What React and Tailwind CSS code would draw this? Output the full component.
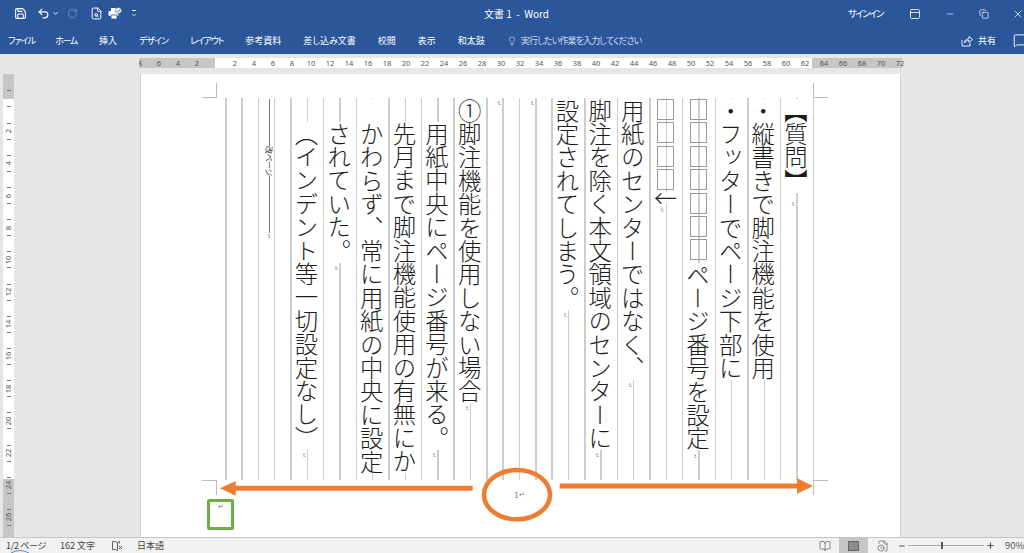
import React from "react";
import { Save, Undo2, RotateCw, FileSearch, Lightbulb, MessageSquare, BookOpen, Minus, Plus, X, Copy, PanelTop, ChevronDown, FileClock } from "lucide-react";

const Mark = ({ className = "" }) => (
  <span className={"block w-[6px] h-[6px] leading-[6px] text-[6px] text-[#888] rotate-90 mr-[6px] text-center font-['Liberation_Sans',sans-serif] " + className}>↵</span>
);

const Txt = ({ children, indent }) => (
  <div className={"w-[24px] bg-white leading-[24px] text-[23.4px] whitespace-nowrap text-[#1c1c1c] font-light [writing-mode:vertical-rl] " + (indent ? "mt-[23.4px]" : "")}>
    {children}
  </div>
);

const Box = () => <div className="w-[17px] h-[21px] mb-[2.4px] shrink-0 border border-[#9a9a9a]" />;

const Col = ({ children }) => (
  <div className="w-[32.64px] shrink-0 h-full pt-[1px] pr-[1.5px] flex flex-col items-center">{children}</div>
);

const rulerNums = [8, 6, 4, 2, "", 2, 4, 6, 8, 10, 12, 14, 16, 18, 20, 22, 24, 26, 28, 30, 32, 34, 36, 38, 40, 42, 44, 46, 48, 50, 52, 54, 56, 58, 60, 62, 64, 66, 68, 70, 72];
const sideNums = ["", 2, 4, 6, 8, 10, 12, 14, 16, 18, 20, 22, 24, 26];
const tabs = [
  ["ファイル", "tracking-[-1px] mr-[-2px]"],
  ["ホーム", "tracking-[-1.3px]"],
  ["挿入", ""],
  ["デザイン", "tracking-[-1px]"],
  ["レイアウト", "tracking-[-1.2px]"],
  ["参考資料", ""],
  ["差し込み文書", ""],
  ["校閲", ""],
  ["表示", ""],
  ["和太鼓", ""],
];

export default function App() {
  return (
    <div className="relative w-[1024px] h-[553px] overflow-hidden flex flex-col bg-[#e6e6e6] font-['Noto_Sans_CJK_JP','Noto_Sans',sans-serif]">
      {/* title bar */}
      <div className="h-[27px] shrink-0 bg-[#2b579a] text-white flex items-center text-[10px]">
        <div className="w-[484px] flex items-center pl-[14px]">
          <Save size={13} strokeWidth={2} />
          <Undo2 size={13} strokeWidth={2.2} className="ml-[10px]" />
          <ChevronDown size={7} strokeWidth={3} className="ml-[2px]" />
          <RotateCw size={11} strokeWidth={2} className="ml-[8px] text-[#6f8fbe]" />
          <FileSearch size={13} strokeWidth={1.8} className="ml-[12px]" />
          <svg width="14" height="13" viewBox="0 0 14 13" className="ml-[5px]" fill="white">
            <rect x="3" y="1" width="6" height="3" />
            <rect x="0.5" y="4" width="10" height="5" rx="1" />
            <rect x="3" y="8" width="6" height="4" stroke="#2b579a" strokeWidth="0.8" />
            <circle cx="10.5" cy="3.5" r="3" stroke="#2b579a" strokeWidth="0.6" />
            <path d="M9 3.5l1.2 1.2L12 2.5" stroke="#2b579a" strokeWidth="1" fill="none" />
          </svg>
          <div className="ml-[9px] flex flex-col items-center gap-[1px]">
            <div className="w-[4px] h-px bg-white" />
            <ChevronDown size={6} strokeWidth={3} />
          </div>
        </div>
        <div className="whitespace-pre">文書 1  -  Word</div>
        <div className="ml-auto flex items-center text-[9.5px] [font-feature-settings:'palt']">
          <span className="whitespace-nowrap tracking-[-1.5px]">サインイン</span>
          <PanelTop size={12} strokeWidth={1.6} className="ml-[26px]" />
          <Minus size={10} strokeWidth={1.5} className="ml-[24px]" />
          <Copy size={10} strokeWidth={1.6} className="ml-[24px]" />
          <X size={12} strokeWidth={1.5} className="ml-[23px]" />
        </div>
      </div>
      {/* ribbon tabs */}
      <div className="h-[27px] shrink-0 bg-[#2b579a] text-white flex items-center text-[9px] pl-[8px] [font-feature-settings:'palt']">
        <div className="flex gap-[22px] whitespace-nowrap">
          {tabs.map(([t, c]) => <span key={t} className={c}>{t}</span>)}
        </div>
        <Lightbulb size={10} strokeWidth={1.5} className="ml-[22px] text-[#dde6f2]" />
        <span className="ml-[4px] whitespace-nowrap tracking-[-0.85px] text-[#cfdaeb]">実行したい作業を入力してください</span>
        <svg width="12" height="12" viewBox="0 0 12 12" className="ml-auto" fill="none" stroke="white" strokeWidth="0.9">
          <path d="M1 5v6h8V8" />
          <path d="M3.5 8c0-2.8 2-4.3 4.5-4.3V1.5L11.5 4.5 8 7.5V5.4C6 5.4 4.5 6.2 3.5 8z" />
        </svg>
        <span className="ml-[5px] whitespace-nowrap">共有</span>
        <MessageSquare size={15} strokeWidth={1.5} className="ml-[17px] mr-[-4px] shrink-0" />
      </div>
      {/* horizontal ruler */}
      <div className="h-[20px] shrink-0 pt-[4px] pl-[139px]">
        <div className="w-[770px] h-[10px] overflow-hidden flex bg-[linear-gradient(to_right,#c6c6c6_76px,#ffffff_76px,#ffffff_673px,#c6c6c6_673px,#c6c6c6_763px,transparent_763px)]">
          <div className="flex -ml-[8.5px] text-[7.5px] leading-[10px] text-[#555] font-['Noto_Sans',sans-serif]">
            {rulerNums.map((n, i) => (
              <span key={i} className="w-[19px] shrink-0 text-center">{n}</span>
            ))}
          </div>
        </div>
      </div>
      {/* workspace */}
      <div className="flex-1 min-h-0 flex">
        {/* vertical ruler */}
        <div className="ml-[3px] w-[11px] h-full overflow-hidden bg-[linear-gradient(to_bottom,#c6c6c6_25px,#ffffff_25px,#ffffff_405px,#c6c6c6_405px)] text-[7.5px] text-[#555] font-['Noto_Sans',sans-serif] pt-[8.9px]">
          {sideNums.map((n, i) => (
            <div key={i} className="h-[32.2px] flex flex-col items-center justify-center gap-[3.5px]">
              <div className="w-[4px] h-px shrink-0 bg-[#777]" />
              <span className="-rotate-90 h-[8px] leading-[8px] shrink-0">{n}</span>
              <div className="w-[4px] h-px shrink-0 bg-[#777]" />
            </div>
          ))}
        </div>
        {/* page */}
        <div className="relative ml-[126px] w-[761px] h-full bg-white border-l border-r border-[#cfcfcf] pt-[24px] pl-[84px]">
          <div className="absolute left-[61px] top-[9px] w-[15px] h-[15px] border-r border-b border-[#bbb]" />
          <div className="absolute left-[672px] top-[9px] w-[15px] h-[15px] border-l border-b border-[#bbb]" />
          <div className="absolute left-[61px] top-[406px] w-[15px] h-[15px] border-r border-t border-[#bbb]" />
          <div className="absolute left-[672px] top-[406px] w-[15px] h-[15px] border-l border-t border-[#bbb]" />

          <div className="w-[589px] h-[382px] flex flex-row-reverse justify-start pr-[1px] bg-[repeating-linear-gradient(to_right,#cdcdcd_0,#cdcdcd_1.5px,transparent_1.5px,transparent_16.32px)]">
            <Col><Txt>【質問】</Txt><Mark className="mt-[8px]" /></Col>
            <Col><Txt>・縦書きで脚注機能を使用</Txt></Col>
            <Col><Txt>・フッターでページ下部に</Txt></Col>
            <Col>
              {[0, 1, 2, 3, 4, 5, 6].map((i) => <Box key={i} />)}
              <Txt>ページ番号を設定</Txt>
              <Mark className="mt-[3px]" />
            </Col>
            <Col>
              {[0, 1, 2, 3].map((i) => <Box key={i} />)}
              <div className="h-[10px] w-[24px] flex items-center justify-center text-[23px] leading-none text-[#222] font-light bg-white">←</div>
              <Mark className="mt-[4px]" />
            </Col>
            <Col><Txt>用紙のセンターではなく、</Txt><Mark className="mt-[2px]" /></Col>
            <Col><Txt>脚注を除く本文領域のセンターに</Txt><Mark className="mt-[2px]" /></Col>
            <Col><Txt>設定されてしまう。</Txt><Mark className="mt-[2px]" /></Col>
            <Col><Mark className="mt-[1px]" /></Col>
            <Col><Mark className="mt-[1px]" /></Col>
            <Col><Txt>①脚注機能を使用しない場合</Txt><Mark className="mt-[2px]" /></Col>
            <Col><Txt indent>用紙中央にページ番号が来る。</Txt><Mark className="mt-[2px]" /></Col>
            <Col><Txt indent>先月まで脚注機能使用の有無にか</Txt></Col>
            <Col><Txt>　かわらず、常に用紙の中央に設定</Txt></Col>
            <Col><Txt indent>されていた。</Txt><Mark className="mt-[2px]" /></Col>
            <Col><Txt indent>（インデント等一切設定なし）</Txt><Mark className="mt-[2px]" /></Col>
            <Col>
              <div className="mr-[9px] w-[10px] h-[134px] flex flex-col items-center">
                <div className="w-px h-[47px] bg-[#777]" />
                <div className="[writing-mode:vertical-rl] [text-orientation:sideways] text-[8px] leading-[10px] tracking-[-0.5px] text-[#444] my-[1px] whitespace-nowrap">改ページ</div>
                <div className="w-px flex-1 bg-[#777]" />
              </div>
              <Mark className="mr-[9px]" />
            </Col>
            <Col />
          </div>

          <div className="w-[589px] pt-[9px] flex justify-center text-[8px] leading-[12px] text-[#777]">
            <span>1</span><span className="text-[7px] font-['Liberation_Sans',sans-serif]">↵</span>
          </div>

          <div className="absolute left-[66px] top-[425px] w-[27px] h-[31px] border-[3px] border-[#70ad47] rounded-[2px] bg-white flex justify-center">
            <span className="text-[7px] leading-[10px] text-[#777] font-['Liberation_Sans',sans-serif]">↵</span>
          </div>
        </div>
      </div>
      {/* status bar */}
      <div className="h-[16px] shrink-0 bg-[#f1f1f1] border-t border-[#c6c6c6] flex items-center text-[9px] text-[#444] pl-[6px]">
        <span className="whitespace-nowrap w-[54px] tracking-[-0.3px]">1/2 ページ</span>
        <span className="whitespace-nowrap w-[52px]">162 文字</span>
        <svg width="11" height="11" viewBox="0 0 11 11" fill="none" stroke="#555" strokeWidth="0.9">
          <path d="M.5 1.5h3l2 1v8l-2-1h-3zM5.5 2.5l2-1v2" />
          <path d="M7 6l3 3M10 6L7 9" />
        </svg>
        <span className="ml-[14px] whitespace-nowrap">日本語</span>
        <div className="ml-auto flex items-center h-full text-[#555]">
          <BookOpen size={12} strokeWidth={1.3} />
          <div className="ml-[8px] w-[29px] h-full bg-[#c6c6c6] flex items-center justify-center">
            <div className="w-[11px] h-[10px] bg-[#8e8e8e] border border-[#666]" />
          </div>
          <FileClock size={12} strokeWidth={1.3} className="ml-[9px]" />
          <Minus size={8} strokeWidth={3} className="ml-[9px]" />
          <div className="relative ml-[2px] w-[76px] h-px bg-[#aaa]">
            <div className="absolute left-[33px] -top-[3px] w-[2px] h-[7px] bg-[#555]" />
          </div>
          <Plus size={9} strokeWidth={3} className="ml-[2px]" />
          <span className="ml-[10px] w-[19px] whitespace-nowrap text-[9.5px]">90%</span>
        </div>
      </div>
      {/* annotations */}
      <svg className="absolute left-0 top-0 pointer-events-none" width="1024" height="553" viewBox="0 0 1024 553">
        <path d="M11 553 Q20 548 29 553" fill="none" stroke="#4f88c6" strokeWidth="1" />
        <ellipse cx="517" cy="494.7" rx="33" ry="24.6" fill="none" stroke="#ed7d31" strokeWidth="4.5" />
        <path d="M472.7 485.8 H235.7 V481 L220 488.3 L235.7 495.7 V490.8 H472.7 Z" fill="#ed7d31" />
        <path d="M559.7 483.5 H797 V478.3 L813 486 L797 493.7 V488.5 H559.7 Z" fill="#ed7d31" />
      </svg>
    </div>
  );
}
